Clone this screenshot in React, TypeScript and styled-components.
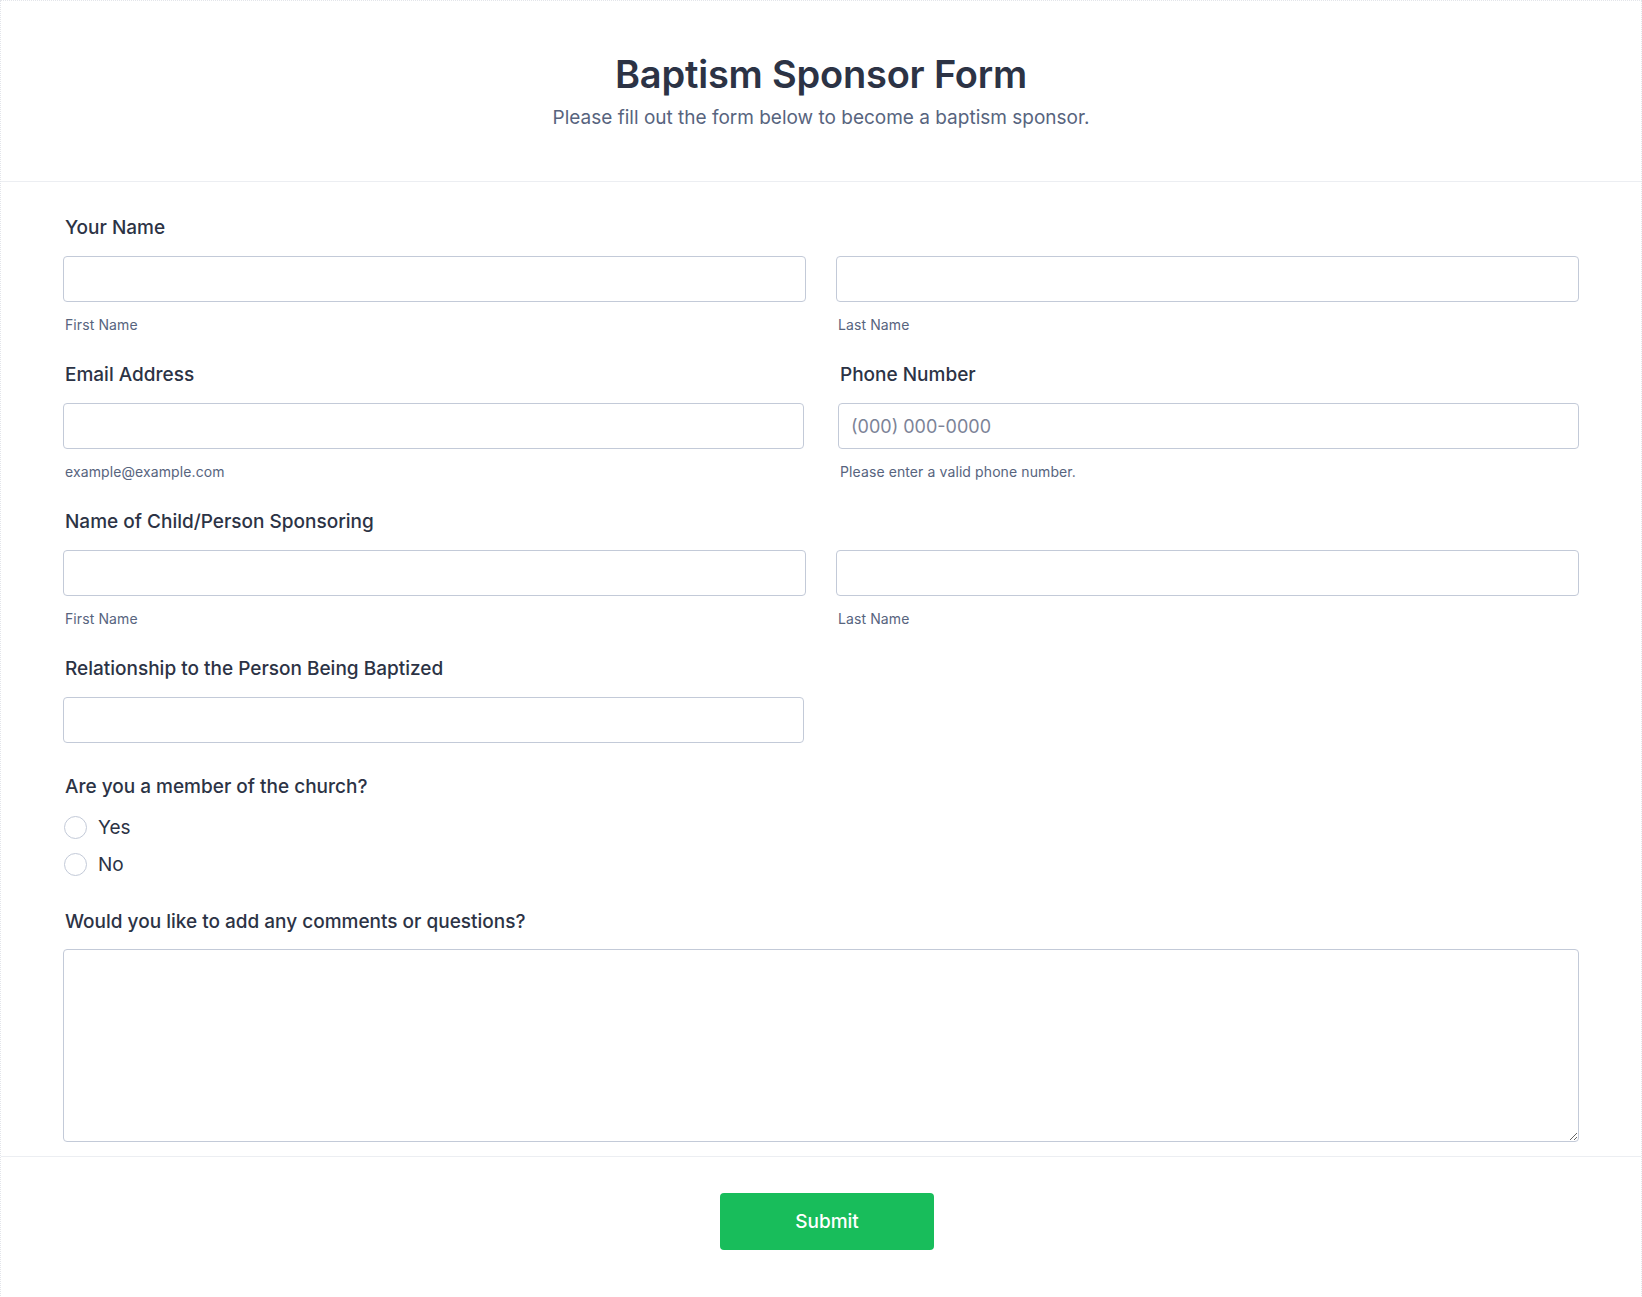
import styled, { createGlobalStyle } from 'styled-components';

const GlobalStyle = createGlobalStyle`
  * { box-sizing: border-box; }
  body {
    margin: 0;
    background: #fff;
    font-family: Inter, "Noto Sans", sans-serif;
    color: #2c3345;
  }
`;

const App = () => {
  return (
    <>
      <GlobalStyle />
      <Page>
        <Header>
          <Title>Baptism Sponsor Form</Title>
          <Subtitle>Please fill out the form below to become a baptism sponsor.</Subtitle>
        </Header>

        <Body>
          <Field>
            <Label>Your Name</Label>
            <Pair gap={30}>
              <div>
                <Input type="text" />
                <SubLabel>First Name</SubLabel>
              </div>
              <div>
                <Input type="text" />
                <SubLabel>Last Name</SubLabel>
              </div>
            </Pair>
          </Field>

          <Pair gap={34}>
            <Field>
              <Label>Email Address</Label>
              <Input type="email" />
              <SubLabel>example@example.com</SubLabel>
            </Field>
            <Field>
              <Label>Phone Number</Label>
              <Input type="tel" placeholder="(000) 000-0000" />
              <SubLabel>Please enter a valid phone number.</SubLabel>
            </Field>
          </Pair>

          <Field>
            <Label>Name of Child/Person Sponsoring</Label>
            <Pair gap={30}>
              <div>
                <Input type="text" />
                <SubLabel>First Name</SubLabel>
              </div>
              <div>
                <Input type="text" />
                <SubLabel>Last Name</SubLabel>
              </div>
            </Pair>
          </Field>

          <Field space={33}>
            <Label>Relationship to the Person Being Baptized</Label>
            <HalfInput type="text" />
          </Field>

          <Field space={28}>
            <Label>Are you a member of the church?</Label>
            <RadioList>
              {['Yes', 'No'].map((opt) => (
                <RadioRow key={opt}>
                  <Radio type="radio" name="member" value={opt} />
                  <span>{opt}</span>
                </RadioRow>
              ))}
            </RadioList>
          </Field>

          <Field space={0}>
            <Label tight>Would you like to add any comments or questions?</Label>
            <TextArea />
          </Field>
        </Body>

        <Footer>
          <SubmitButton type="button">Submit</SubmitButton>
        </Footer>
      </Page>
    </>
  );
};

export default App;

const Page = styled.div`
  width: 100%;
  min-height: 1297px;
  border: 1px dotted #e3e5ea;
  background: #fff;
`;

const Header = styled.header`
  padding: 50px 20px 49px;
  text-align: center;
  border-bottom: 1px solid #eceef2;
`;

const Title = styled.h1`
  margin: 0;
  font-size: 38px;
  line-height: 46px;
  font-weight: 600;
  color: #2c3345;
  letter-spacing: -0.2px;
`;

const Subtitle = styled.p`
  margin: 7px 0 0;
  font-size: 19px;
  line-height: 28px;
  color: #57647e;
`;

const Body = styled.div`
  padding: 35px 62px 14px 62px;
  border-bottom: 1px solid #eceef2;
`;

const Field = styled.div<{ space?: number }>`
  padding-bottom: ${({ space }) => (space ?? 30)}px;
`;

const Pair = styled.div<{ gap: number }>`
  display: grid;
  grid-template-columns: 1fr 1fr;
  column-gap: ${({ gap }) => gap}px;
`;

const Label = styled.label<{ tight?: boolean }>`
  display: block;
  padding-left: 2px;
  margin-bottom: ${({ tight }) => (tight ? '16px' : '17px')};
  font-size: 19px;
  line-height: 22px;
  font-weight: 500;
  color: #2c3345;
`;

const Input = styled.input`
  display: block;
  width: 100%;
  height: 46px;
  padding: 0 12px;
  border: 1px solid #c3cad8;
  border-radius: 4px;
  background: #fff;
  font-family: Inter, "Noto Sans", sans-serif;
  font-size: 18px;
  color: #2c3345;
  outline: none;

  &::placeholder {
    color: #7c8397;
  }
`;

const HalfInput = styled(Input)`
  width: calc(50% - 17px);
`;

const SubLabel = styled.div`
  margin-top: 14px;
  padding-left: 2px;
  font-size: 14px;
  line-height: 18px;
  letter-spacing: 0.1px;
  color: #57647e;
`;

const RadioList = styled.div`
  display: flex;
  flex-direction: column;
  margin-top: -6px;
`;

const RadioRow = styled.label`
  display: flex;
  align-items: center;
  gap: 11px;
  height: 37px;
  font-size: 19px;
  color: #2c3345;
`;

const Radio = styled.input`
  appearance: none;
  margin: 0 0 0 1px;
  width: 23px;
  height: 23px;
  border: 1px solid #c3cad8;
  border-radius: 50%;
  background: #fff;
`;

const TextArea = styled.textarea`
  display: block;
  width: 100%;
  height: 193px;
  padding: 10px 12px;
  border: 1px solid #c3cad8;
  border-radius: 4px;
  font-family: Inter, "Noto Sans", sans-serif;
  font-size: 18px;
  outline: none;
`;

const Footer = styled.div`
  display: flex;
  justify-content: center;
  padding: 36px 0 47px 12px;
`;

const SubmitButton = styled.button`
  width: 214px;
  height: 57px;
  border: none;
  border-radius: 4px;
  background: #18bd5b;
  color: #fff;
  font-family: Inter, "Noto Sans", sans-serif;
  font-size: 19px;
  font-weight: 500;
  cursor: pointer;
`;
